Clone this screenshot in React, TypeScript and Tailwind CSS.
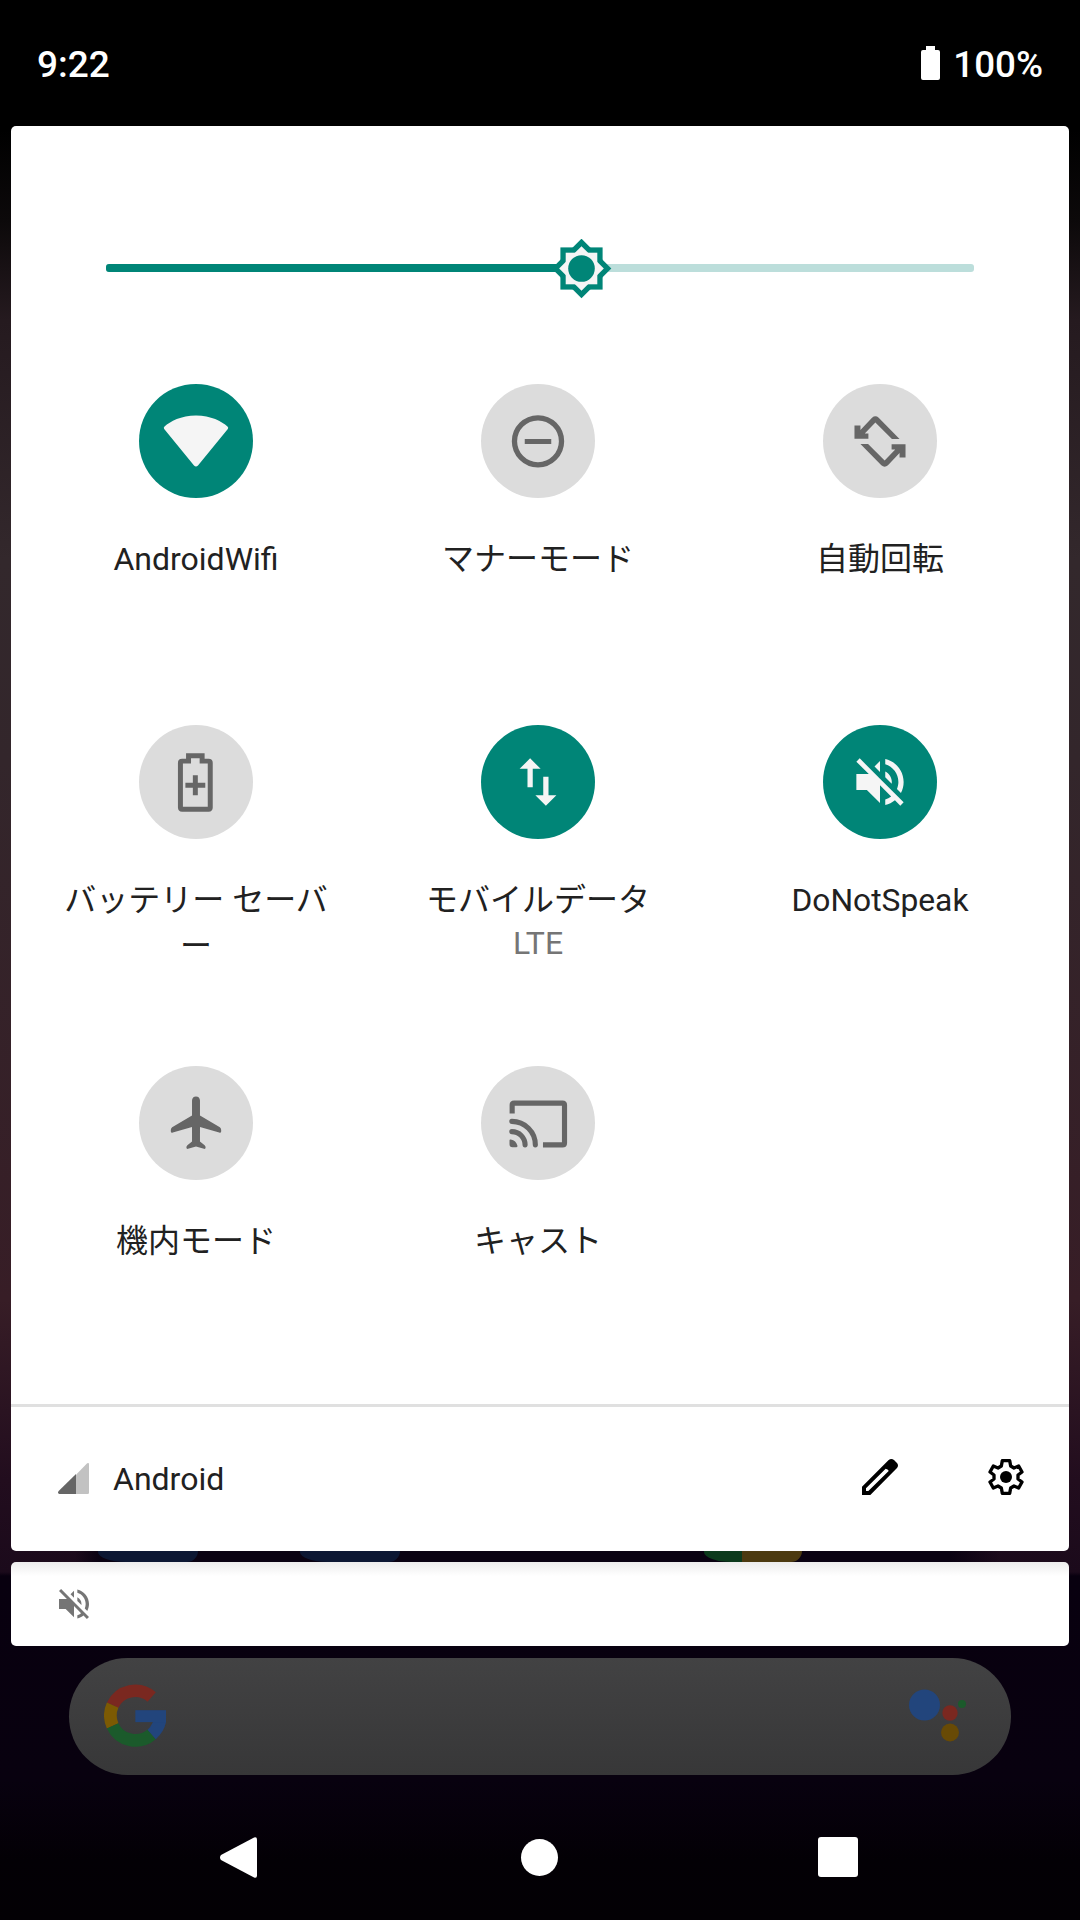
import React from "react";

type TileProps = {
  icon: React.ReactNode;
  box: string;
  active?: boolean;
  sub?: string;
  children: React.ReactNode;
};

const MUTE_PATH =
  "M16.5 12c0-1.77-1.02-3.29-2.5-4.03v2.21l2.45 2.45c.03-.2.05-.41.05-.63zm2.5 0c0 .94-.2 1.82-.54 2.64l1.51 1.51C20.63 14.91 21 13.5 21 12c0-4.28-2.99-7.86-7-8.77v2.06c2.89.86 5 3.54 5 6.71zM4.27 3L3 4.27 7.73 9H3v6h4l5 5v-6.73l4.25 4.25c-.67.52-1.42.93-2.25 1.18v2.06c1.38-.31 2.63-.95 3.69-1.81L19.73 21 21 19.73l-9-9L4.27 3zM12 4L9.91 6.09 12 8.18V4z";

function Tile({ icon, box, active, sub, children }: TileProps) {
  return (
    <div className="flex h-[341px] flex-col items-center">
      <div
        className={
          active
            ? "flex size-[114px] shrink-0 items-center justify-center rounded-full bg-[#008577] text-[#f5f5f5]"
            : "flex size-[114px] shrink-0 items-center justify-center rounded-full bg-[#dcdcdc] text-[#666666]"
        }
      >
        <svg viewBox={box} className="size-full" fill="currentColor">
          {icon}
        </svg>
      </div>
      <div className="mt-[38px] text-center leading-[46px] whitespace-nowrap text-[#212121]">{children}</div>
      {sub && <div className="-mt-[1px] leading-[42px] text-[#757575]">{sub}</div>}
    </div>
  );
}

const wifi = (
  <path d="M288 135c45 0 78 18 95 33q4 4 1 8L294 286q-6 6-12 0L192 176q-3-5 1-8c17-15 50-33 95-33z" />
);

const dnd = (
  <>
    <circle cx="354" cy="214" r="71" fill="none" stroke="currentColor" strokeWidth="16" />
    <rect x="314" y="207" width="80" height="15" />
  </>
);

const ROTATE_ARROW =
  "M296 143L359 207H336L286 157L254 190H265V206H223V166H241V180L276 143Q286 134 296 143z";
const rotate = (
  <>
    <path d={ROTATE_ARROW} />
    <path d={ROTATE_ARROW} transform="rotate(180 300 214.5)" />
  </>
);

const batterySaver = (
  <g fill="none" stroke="currentColor" strokeWidth="15">
    <path d="M445.500 136H486.500V152H506Q511 152 511 157V292Q511 297 506 297H426Q421 297 421 292V157Q421 152 426 152H445.500z" />
    <path d="M436 225H496M466 195V255" />
  </g>
);

const airplane = (
  <path d="M0 138C7 138 12 143 12 150V195L72 231Q76 234 76 239V244Q75 249 70 247L12 230V274L26 285Q29 287 29 292Q29 297 24 296L0 289L-24 296Q-29 297-29 292Q-29 287-26 285L-12 274V230L-70 247Q-75 249-76 244V239Q-76 234-72 231L-12 195V150C-12 143-7 138 0 138z" />
);

const cast = (
  <>
    <g fill="none" stroke="currentColor" strokeWidth="15.500">
      <path d="M-78 189V164Q-78 158-72 158H74Q80 158 80 164V278Q80 284 74 284H15" />
      <path strokeLinecap="round" d="M-79 213A71 71 0 0 1-8 284M-79 244A40 40 0 0 1-39 284" />
    </g>
    <path d="M-86 271Q-86 267-82 268Q-66 271-62 287Q-61 291-65 291H-77Q-86 291-86 282z" />
  </>
);

function GoogleG() {
  return (
    <svg viewBox="132 101 186 190" className="mb-[2px] h-[63px] w-[62px]" preserveAspectRatio="none">
      <g fill="none" strokeWidth="38">
        <path stroke="#7a2820" d="M275 140A75 75 0 0 0 158 165" />
        <path stroke="#7c5a03" d="M158 165A75 75 0 0 0 158 227" />
        <path stroke="#1b5a2b" d="M158 227A75 75 0 0 0 275 253" />
        <path stroke="#22457c" d="M275 253A75 75 0 0 0 301 196" />
      </g>
      <rect x="226" y="180" width="92" height="36" fill="#22457c" />
    </svg>
  );
}

export default function App() {
  return (
    <div className="flex h-[1920px] w-[1080px] flex-col overflow-hidden bg-[linear-gradient(to_bottom,#000_0,#000_130px,#0c090a_220px,#251a1f_320px,#33282c_560px,#33262b_760px,#371d26_1300px,#220d1e_1480px,#1b0a1b_1572px,#08000f_1576px,#08010f_1780px,#030005_1860px,#030004_1920px)] font-['Roboto','Noto_Sans_CJK_JP',sans-serif] text-[32px]">
      <header className="flex h-[126px] shrink-0 items-center justify-between bg-black px-[37px] pt-[3px] text-[37px] font-medium text-white">
        <span>9:22</span>
        <div className="flex items-center gap-[13px]">
          <svg viewBox="0 0 19 34" className="mb-[3px] h-[34px] w-[19px]" fill="currentColor">
            <path d="M5 0h9v4h3q2 0 2 2v26q0 2-2 2H2q-2 0-2-2V6q0-2 2-2h3z" />
          </svg>
          <span className="text-[36.75px]">100%</span>
        </div>
      </header>

      <main className="mx-[11px] flex h-[1425px] shrink-0 flex-col rounded-[5px] bg-white">
        <div className="relative mx-[95px] mt-[138px] flex h-2 shrink-0 rounded-[3px] bg-[#bcdedb]">
          <div className="h-2 w-[476px] rounded-[3px] bg-[#008577]" />
          <svg viewBox="-30 -30 60 60" className="absolute top-[-25.500px] left-[445.500px] size-[60px]">
            <g fill="#008577" transform="translate(-0.5 -0.5)">
              <rect x="-21.100" y="-21.100" width="42.200" height="42.200" />
              <rect x="-21.100" y="-21.100" width="42.200" height="42.200" transform="rotate(45)" />
            </g>
            <g fill="#f5f5f5" transform="translate(-0.5 -0.5)">
              <rect x="-15.800" y="-15.800" width="31.600" height="31.600" />
              <rect x="-15.800" y="-15.800" width="31.600" height="31.600" transform="rotate(45)" />
            </g>
            <circle cx="-0.5" cy="-0.5" r="13.300" fill="#008577" />
          </svg>
        </div>

        <section className="mt-[112px] ml-[14px] grid h-[1018px] w-[1026px] shrink-0 auto-rows-[341px] grid-cols-3">
          <Tile icon={wifi} box="116 40 344 344" active>
            AndroidWifi
          </Tile>
          <Tile icon={dnd} box="182 41 344 344">マナーモード</Tile>
          <Tile icon={rotate} box="128 41 344 344">自動回転</Tile>
          <Tile icon={batterySaver} box="296 43 344 344">
            バッテリー セーバ
            <br />ー
          </Tile>
          <Tile
            icon={
              <path d="M16 17.010V10h-2v7.010h-3L15 21l4-3.990h-3zM9 3L5 6.990h3V14h2V6.990h3L9 3z" />
            }
            box="-9.700 -9.700 43.400 43.400"
            active
            sub="LTE"
          >
            モバイルデータ
          </Tile>
          <Tile icon={<path d={MUTE_PATH} />} box="-9.700 -9.700 43.400 43.400" active>
            <span className="text-[31.75px]">DoNotSpeak</span>
          </Tile>
          <Tile icon={airplane} box="-172 46 344 344">機内モード</Tile>
          <Tile icon={cast} box="-172 46 344 344">キャスト</Tile>
        </section>

        <footer className="mt-auto flex h-[147px] shrink-0 items-center border-t-[3px] border-[#e0e0e0] pr-[45px] pl-[47px] text-[#212121]">
          <svg viewBox="174 249 93 93" className="mb-[1px] size-[31px]">
            <path fill="#c2c2c2" d="M228 284L260 251Q267 246 267 253V338Q267 342 263 342H228z" />
            <path fill="#666" d="M228 282V342H178Q171 339 176 333z" />
          </svg>
          <span className="ml-[24px]">Android</span>
          <svg viewBox="246 207 108 108" className="mb-[4px] ml-auto size-9">
            <path
              fillRule="evenodd"
              d="M246 290L326 210Q334 204 342 210L351 219Q357 227 351 234L271 315H246zM258 303H265L326 243L324 239L317 236L258 295z"
            />
          </svg>
          <svg viewBox="624 207 108 108" className="mb-[4px] ml-[90px] size-9">
            <path
              fill="none"
              stroke="#000"
              strokeWidth="10"
              strokeLinejoin="round"
              d="M667 212H689L692 228L702 234L716 228L726 246L714 255V267L726 276L716 294L702 288L692 294L689 310H667L664 294L654 288L640 294L630 276L642 267V255L630 246L640 228L654 234L664 228z"
            />
            <circle cx="678" cy="261" r="18" />
          </svg>
        </footer>
      </main>

      {/* Dimmed launcher icons showing between the two cards */}
      <div className="flex h-[11px] shrink-0 overflow-hidden bg-[linear-gradient(to_right,transparent_75px,#0a0212_100px,#0a0212_950px,transparent_1000px)] pl-[98px]">
        <div className="h-[11px] w-[100px] rounded-br-[12px] rounded-bl-[30px_11px] bg-[#0c1733]" />
        <div className="ml-[102px] h-[11px] w-[100px] rounded-br-[12px] rounded-bl-[30px_11px] bg-[#0c1733]" />
        <div className="ml-[304px] flex h-[11px] w-[98px] overflow-hidden rounded-br-[12px] rounded-bl-[30px_11px]">
          <div className="w-[38px] bg-[#0c3a1c]" />
          <div className="flex-1 bg-[#4c3a10]" />
        </div>
      </div>

      <div className="mx-[11px] flex h-[84px] shrink-0 items-center rounded-[5px] bg-[linear-gradient(to_bottom,#ececec,#fff_14px)] pl-[43px] text-[#757575]">
        <svg viewBox="0 0 24 24" className="size-10" fill="currentColor">
          <path d={MUTE_PATH} />
        </svg>
      </div>

      <div className="mx-[69px] mt-3 flex h-[117px] shrink-0 items-center justify-between rounded-full bg-[linear-gradient(to_bottom,#424243,#373738)] pr-[44px] pl-[35px]">
        <GoogleG />
        <svg viewBox="0 0 58 54" className="mt-[-2px] h-[54px] w-[58px]">
          <circle cx="15.500" cy="16" r="15.500" fill="#22457c" />
          <circle cx="41" cy="24" r="7.700" fill="#7a2820" />
          <circle cx="41" cy="43.500" r="9" fill="#684a05" />
          <circle cx="53" cy="15" r="4" fill="#1b5a2b" />
        </svg>
      </div>

      <nav className="mt-[60px] flex h-[44px] shrink-0 items-center pl-[220px] text-white">
        <svg viewBox="0 0 38 43" className="h-[43px] w-[37px]" fill="currentColor">
          <path d="M1 19L35 1Q38 0 38 3V40Q38 43 35 42L1 24Q-1 21.500 1 19z" />
        </svg>
        <div className="ml-[264px] size-[37px] rounded-full bg-white" />
        <div className="ml-[260px] size-10 rounded-[3px] bg-white" />
      </nav>
    </div>
  );
}
